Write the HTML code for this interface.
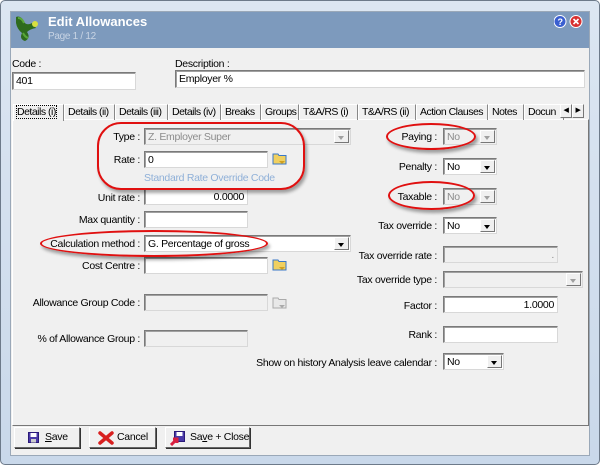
<!DOCTYPE html>
<html><head><style>
*{box-sizing:border-box;margin:0;padding:0}
body{width:600px;height:465px;overflow:hidden;background:#fff;font-family:"Liberation Sans",sans-serif;font-size:10.5px;letter-spacing:-0.3px;color:#000;position:relative}
.a{position:absolute}
.frame{left:0;top:0;width:600px;height:465px;background:linear-gradient(#dce6f2,#c9d8ea);border:1px solid #6d7a8a;border-radius:5px}
.client{left:10px;top:11px;width:580px;height:445px;background:#f0f0f0;border:1px solid #9aa8b8}
.title{left:11px;top:12px;width:578px;height:36px;background:#7d9abd}
.lbl{position:absolute;white-space:nowrap}
.r{text-align:right}
.in{position:absolute;background:#fff;border:1px solid #7a7a7a;border-right-color:#d8d8d8;border-bottom-color:#d8d8d8;box-shadow:inset 1px 1px 0 #a0a0a0;padding:1px 3px;line-height:14px;white-space:nowrap;overflow:hidden}
.dis{background:#f0f0f0;color:#8c8c8c}
.dd{position:absolute;right:1px;top:1px;width:15px;bottom:1px;background:#f0f0f0;border:1px solid #fff;border-right-color:#777;border-bottom-color:#777}
.dd:after{content:"";position:absolute;left:3px;top:5px;border:3.5px solid transparent;border-top:4px solid #000}
.dis .dd:after{border-top-color:#a0a0a0}
.tab{position:absolute;top:104px;height:16px;border:1px solid #fff;border-right-color:#888;border-bottom:none;padding:1px 0 0 3px;white-space:nowrap;line-height:13px;overflow:hidden;letter-spacing:-0.5px}
.ell{position:absolute;border:2.5px solid #e01010;border-radius:50%/50%;box-shadow:2px 3px 3px rgba(0,0,0,.35)}
.btn{position:absolute;top:427px;height:21px;border:1px solid #fff;border-right-color:#666;border-bottom-color:#666;box-shadow:1px 1px 0 #333;background:#f0f0f0;line-height:19px;padding-left:22px;white-space:nowrap}
.fold{position:absolute;width:15px;height:13px}
</style></head><body>
<div class="a frame"></div>
<div class="a client"></div>
<div class="a title"></div>
<svg class="a" style="left:13px;top:13px" width="26" height="30" viewBox="0 0 26 30"><path d="M3 4 Q8 2 11 9 Q14 13 19 10 L23 15 Q17 16 14 19 Q18 25 12 28 Q6 26 9 20 Q4 16 3 10Z" fill="#2e6b1e"/><path d="M5 5 Q9 5 11 10 M10 20 Q12 24 15 25" stroke="#5aa83a" stroke-width="2" fill="none"/><circle cx="22" cy="11" r="3" fill="#d8e040"/></svg>
<div class="lbl" style="left:48px;top:14px;color:#fff;font-size:13px;font-weight:bold;letter-spacing:0">Edit Allowances</div>
<div class="lbl" style="left:48px;top:31px;color:#c8d4e4;font-size:10px">Page 1 / 12</div>
<svg class="a" style="left:554px;top:15px" width="30" height="13"><circle cx="6" cy="6.5" r="6" fill="#3a5fd0" stroke="#fff"/><text x="3.5" y="10" fill="#fff" font-size="9" font-weight="bold" font-family="Liberation Sans">?</text><circle cx="22" cy="6.5" r="6" fill="#d83030" stroke="#fff"/><path d="M19.5 4 L24.5 9 M24.5 4 L19.5 9" stroke="#fff" stroke-width="1.6"/></svg>

<div class="lbl" style="left:12px;top:58px">Code :</div>
<div class="in" style="left:12px;top:72px;width:124px;height:18px">401</div>
<div class="lbl" style="left:175px;top:58px">Description :</div>
<div class="in" style="left:175px;top:70px;width:410px;height:18px">Employer %</div>

<div class="a" style="left:12px;top:119px;width:577px;height:307px;border:1px solid #fff;border-right-color:#777;border-bottom-color:#777"></div>
<div class="tab" style="left:13px;width:51px;background:#f0f0f0;height:17px"><span style="outline:1px dotted #000">Details (i)</span></div>
<div class="tab" style="left:64px;width:51px">Details (ii)</div>
<div class="tab" style="left:115px;width:53px">Details (iii)</div>
<div class="tab" style="left:168px;width:53px">Details (iv)</div>
<div class="tab" style="left:221px;width:40px">Breaks</div>
<div class="tab" style="left:261px;width:38px">Groups</div>
<div class="tab" style="left:299px;width:59px">T&amp;A/RS (i)</div>
<div class="tab" style="left:358px;width:58px">T&amp;A/RS (ii)</div>
<div class="tab" style="left:416px;width:72px">Action Clauses</div>
<div class="tab" style="left:488px;width:36px">Notes</div>
<div class="tab" style="left:524px;width:40px">Docun</div>
<div class="a" style="left:560px;top:104px;width:12px;height:14px;border:1px solid #fff;border-right-color:#777;border-bottom-color:#777;background:#f0f0f0;font-size:7px;text-align:center;line-height:12px">◀</div>
<div class="a" style="left:572px;top:104px;width:12px;height:14px;border:1px solid #fff;border-right-color:#777;border-bottom-color:#777;background:#f0f0f0;font-size:7px;text-align:center;line-height:12px">▶</div>

<div class="lbl r" style="right:460px;top:131px">Type :</div>
<div class="in dis" style="left:144px;top:128px;width:207px;height:17px">Z. Employer Super<div class="dd"></div></div>
<div class="lbl r" style="right:460px;top:154px">Rate :</div>
<div class="in" style="left:144px;top:151px;width:124px;height:17px">0</div>
<svg class="fold" style="left:272px;top:152px" viewBox="0 0 15 13"><path d="M1 2h5l1 1.5h7v8.5h-13z" fill="#f0d060" stroke="#3a78c8"/><path d="M7 9h6l-3 3z" fill="#d0a020"/></svg>
<div class="lbl" style="left:144px;top:172px;color:#8fb0d8">Standard Rate Override Code</div>
<div class="lbl r" style="right:460px;top:192px">Unit rate :</div>
<div class="in r" style="left:144px;top:188px;width:104px;height:17px;text-align:right">0.0000</div>
<div class="lbl r" style="right:460px;top:214px">Max quantity :</div>
<div class="in" style="left:144px;top:211px;width:104px;height:17px"></div>
<div class="lbl r" style="right:460px;top:238px">Calculation method :</div>
<div class="in" style="left:144px;top:235px;width:207px;height:17px">G. Percentage of gross<div class="dd"></div></div>
<div class="lbl r" style="right:460px;top:260px">Cost Centre :</div>
<div class="in" style="left:144px;top:257px;width:124px;height:17px"></div>
<svg class="fold" style="left:272px;top:258px" viewBox="0 0 15 13"><path d="M1 2h5l1 1.5h7v8.5h-13z" fill="#f0d060" stroke="#3a78c8"/><path d="M7 9h6l-3 3z" fill="#d0a020"/></svg>
<div class="lbl r" style="right:460px;top:297px">Allowance Group Code :</div>
<div class="in dis" style="left:144px;top:294px;width:124px;height:17px"></div>
<svg class="fold" style="left:272px;top:296px" viewBox="0 0 15 13"><path d="M1 2h5l1 1.5h7v8.5h-13z" fill="#e8e8e8" stroke="#aaa"/><path d="M7 9h6l-3 3z" fill="#aaa"/></svg>
<div class="lbl r" style="right:460px;top:333px">% of Allowance Group :</div>
<div class="in dis" style="left:144px;top:330px;width:104px;height:17px"></div>

<div class="lbl r" style="right:163px;top:131px">Paying :</div>
<div class="in dis" style="left:443px;top:128px;width:54px;height:17px">No<div class="dd"></div></div>
<div class="lbl r" style="right:163px;top:161px">Penalty :</div>
<div class="in" style="left:443px;top:158px;width:54px;height:17px">No<div class="dd"></div></div>
<div class="lbl r" style="right:163px;top:191px">Taxable :</div>
<div class="in dis" style="left:443px;top:188px;width:54px;height:17px">No<div class="dd"></div></div>
<div class="lbl r" style="right:163px;top:220px">Tax override :</div>
<div class="in" style="left:443px;top:217px;width:54px;height:17px">No<div class="dd"></div></div>
<div class="lbl r" style="right:163px;top:250px">Tax override rate :</div>
<div class="in dis" style="left:443px;top:246px;width:115px;height:17px;text-align:right">.</div>
<div class="lbl r" style="right:163px;top:274px">Tax override type :</div>
<div class="in dis" style="left:443px;top:271px;width:140px;height:17px"><div class="dd"></div></div>
<div class="lbl r" style="right:163px;top:300px">Factor :</div>
<div class="in" style="left:443px;top:296px;width:115px;height:17px;text-align:right">1.0000</div>
<div class="lbl r" style="right:163px;top:329px">Rank :</div>
<div class="in" style="left:443px;top:326px;width:115px;height:17px"></div>
<div class="lbl r" style="right:163px;top:357px">Show on history Analysis leave calendar :</div>
<div class="in" style="left:443px;top:353px;width:61px;height:17px">No<div class="dd"></div></div>

<div class="ell" style="left:97px;top:122px;width:208px;height:68px;border-radius:24px"></div>
<div class="ell" style="left:40px;top:230px;width:228px;height:27px"></div>
<div class="ell" style="left:386px;top:123px;width:90px;height:27px"></div>
<div class="ell" style="left:388px;top:181px;width:87px;height:29px"></div>

<div class="btn" style="left:14px;width:66px;padding-left:30px"><svg class="a" style="left:13px;top:4px" width="11" height="11"><rect x=".5" y=".5" width="10" height="10" fill="#4a3aa8" stroke="#2a1a78"/><rect x="2.5" y="1" width="6" height="4" fill="#fff"/><rect x="3" y="7" width="5" height="3.5" fill="#ccc"/></svg><u>S</u>ave</div>
<div class="btn" style="left:89px;width:67px;padding-left:27px"><svg class="a" style="left:8px;top:3px" width="16" height="14"><path d="M2 2L14 12M14 2L2 12" stroke="#d82020" stroke-width="3.5" stroke-linecap="round"/></svg>Cancel</div>
<div class="btn" style="left:165px;width:85px;padding-left:24px"><svg class="a" style="left:4px;top:3px" width="16" height="15"><rect x="4.5" y=".5" width="10" height="10" fill="#4a3aa8" stroke="#2a1a78"/><rect x="6.5" y="1" width="6" height="4" fill="#fff"/><path d="M1 14L7 8M3 8h4v4" stroke="#d82040" stroke-width="3" fill="none"/></svg>Sa<u>v</u>e + Close</div>
</body></html>
